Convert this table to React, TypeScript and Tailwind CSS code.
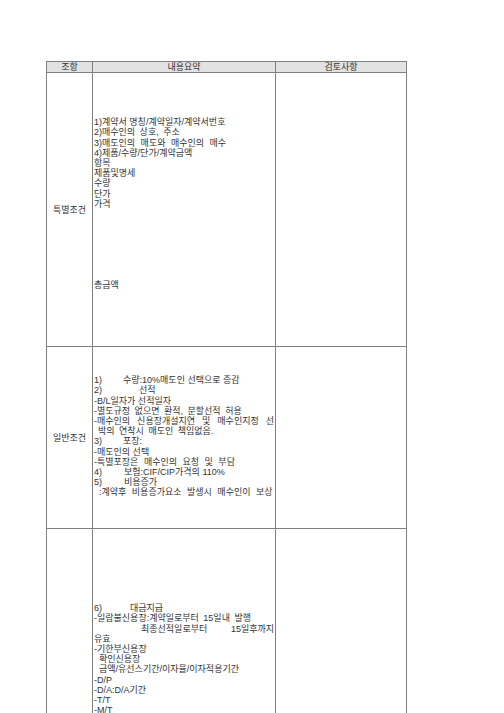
import React from "react"

const font = {
  fontFamily: '"Liberation Sans", "Noto Sans CJK KR", sans-serif',
}

function Tab({ w, children }: { w: string; children: React.ReactNode }) {
  return <span className={`inline-block ${w}`}>{children}</span>
}

export default function App() {
  return (
    <div className="min-h-[713px] w-[504px] bg-white pt-[61px] pl-[46px] text-[9px] leading-[10.2px] text-[#333]" style={font}>
      <table className="w-[360px] table-fixed border-collapse border border-[#808080]">
        <colgroup>
          <col className="w-[46px]" />
          <col className="w-[183px]" />
          <col className="w-[131px]" />
        </colgroup>
        <thead>
          <tr className="h-[11px] bg-[#e2e2e2]">
            <th className="border border-[#808080] p-0 text-center font-normal">조항</th>
            <th className="border border-[#808080] p-0 text-center font-normal">내용요약</th>
            <th className="border border-[#808080] p-0 text-center font-normal">검토사항</th>
          </tr>
        </thead>
        <tbody className="whitespace-nowrap">
          <tr className="h-[274px]">
            <td className="border border-[#808080] p-0 text-center align-middle">특별조건</td>
            <td className="border border-[#808080] px-px pt-[44px] align-top">
              <div>1)계약서 명칭/계약일자/계약서번호</div>
              <div className="[word-spacing:2px]">2)매수인의 상호, 주소</div>
              <div className="[word-spacing:3px]">3)매도인의 매도와 매수인의 매수</div>
              <div>4)제품/수량/단가/계약금액</div>
              <div>항목</div>
              <div>제품및명세</div>
              <div>수량</div>
              <div>단가</div>
              <div>가격</div>
              <div className="mt-[71px]">총금액</div>
            </td>
            <td className="border border-[#808080] p-0"></td>
          </tr>
          <tr className="h-[182px]">
            <td className="border border-[#808080] p-0 text-center align-middle">일반조건</td>
            <td className="border border-[#808080] px-px pt-[28px] align-top">
              <div><Tab w="w-[29px]">1)</Tab>수량:10%매도인 선택으로 증감</div>
              <div><Tab w="w-[45px]">2)</Tab>선적</div>
              <div>-B/L일자가 선적일자</div>
              <div className="[word-spacing:2px]">-별도규정 없으면 환적, 분할선적 허용</div>
              <div className="text-justify [text-align-last:justify]">-매수인의 신용장개설지연 및 매수인지정 선</div>
              <div className="pl-[4px] [word-spacing:2px]">박의 연착시 매도인 책임없음.</div>
              <div><Tab w="w-[29px]">3)</Tab>포장:</div>
              <div>-매도인의 선택</div>
              <div className="[word-spacing:3px]">-특별포장은 매수인의 요청 및 부담</div>
              <div><Tab w="w-[30px]">4)</Tab>보험:CIF/CIP가격의 110%</div>
              <div><Tab w="w-[30px]">5)</Tab>비용증가</div>
              <div className="pl-[5px] [word-spacing:3px]">:계약후 비용증가요소 발생시 매수인이 보상</div>
            </td>
            <td className="border border-[#808080] p-0"></td>
          </tr>
          <tr className="h-[400px]">
            <td className="border border-[#808080] p-0 text-center align-middle"></td>
            <td className="border border-[#808080] px-px pt-[74px] align-top">
              <div><Tab w="w-[36px]">6)</Tab>대금지급</div>
              <div className="[word-spacing:2px]">-일람불신용장:계약일로부터 15일내 발행</div>
              <div className="pl-[47px]"><Tab w="w-[90px]">최종선적일로부터</Tab>15일후까지</div>
              <div>유효</div>
              <div>-기한부신용장</div>
              <div className="pl-[5px]">확인신용장</div>
              <div className="pl-[5px]">금액/유선스기간/이자율/이자적용기간</div>
              <div>-D/P</div>
              <div>-D/A:D/A기간</div>
              <div>-T/T</div>
              <div>-M/T</div>
              <div>-CAD</div>
            </td>
            <td className="border border-[#808080] p-0"></td>
          </tr>
        </tbody>
      </table>
    </div>
  )
}
